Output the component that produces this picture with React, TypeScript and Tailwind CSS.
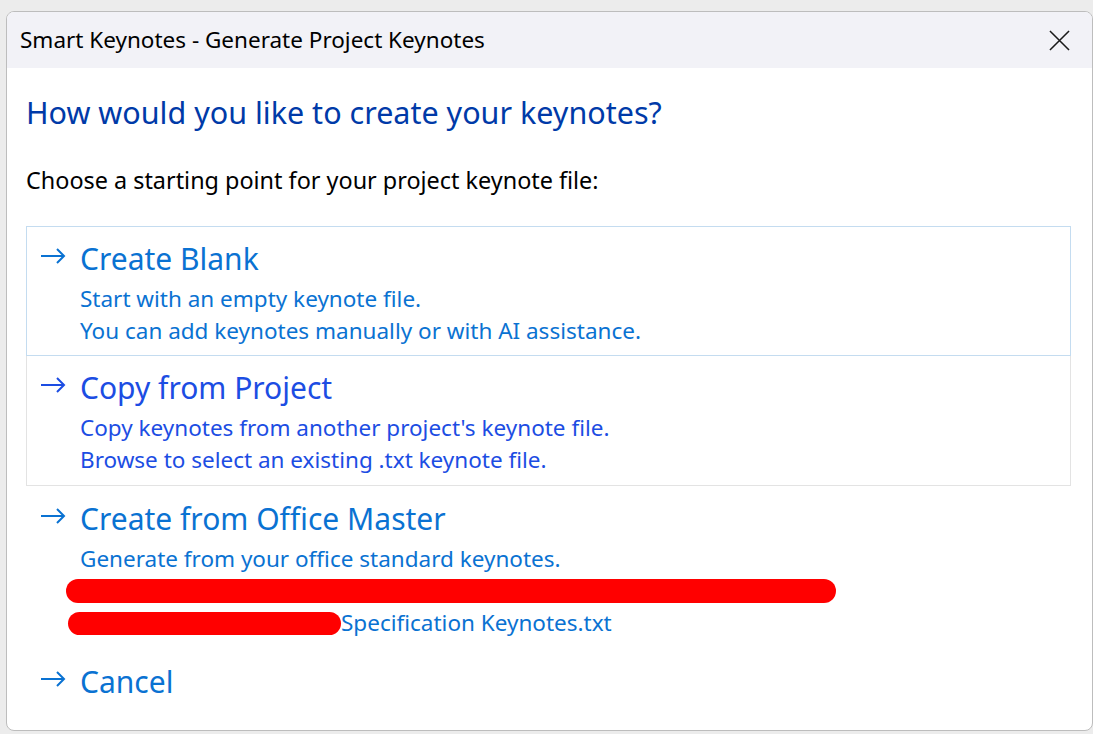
import React from 'react';

const Arrow: React.FC<{ className?: string }> = ({ className }) => (
  <svg viewBox="0 0 26 16" className={className} fill="none" stroke="currentColor" strokeWidth={2}>
    <path d="M1 8h23M17 1l7 7-7 7" />
  </svg>
);

type OptionProps = {
  title: string;
  lines?: React.ReactNode[];
  tone: string;
  frame: string;
};

const Option: React.FC<OptionProps> = ({ title, lines = [], tone, frame }) => (
  <button className={`flex w-full items-start text-left px-[13px] pt-[12px] ${frame} ${tone}`}>
    <Arrow className="mt-[9px] h-[16px] w-[26px] shrink-0" />
    <div className="ml-[14px] flex flex-col">
      <span className="text-[30px] leading-[40px]">{title}</span>
      <div className="mt-[4px] flex flex-col">
        {lines.map((l, i) => (
          <span key={i} className="text-[22.5px] leading-[32px]">
            {l}
          </span>
        ))}
      </div>
    </div>
  </button>
);

export default function App() {
  return (
    <div
      className="h-[734px] w-[1093px] overflow-hidden bg-[#ececec] pl-[6px] pt-[11px]"
      style={{ fontFamily: '"Noto Sans", "Open Sans", sans-serif' }}
    >
      <div className="flex h-[720px] w-[1087px] flex-col overflow-hidden rounded-[8px] border border-[#bdbdbd] bg-white">
        <div className="flex h-[56px] shrink-0 items-center justify-between bg-[#f2f2f7] pl-[13px] pr-[22px]">
          <span className="text-[22.5px] text-black">Smart Keynotes - Generate Project Keynotes</span>
          <svg viewBox="0 0 22 22" className="h-[21px] w-[21px] text-[#1a1a1a]" stroke="currentColor" strokeWidth={1.6}>
            <path d="M1 1l20 20M21 1L1 21" />
          </svg>
        </div>

        <div className="flex flex-col px-[19px]">
          <h1 className="mt-[24px] text-[30.5px] leading-[40px] text-[#003aa8]">
            How would you like to create your keynotes?
          </h1>
          <p className="mt-[33px] text-[23.4px] leading-[30px] text-black">
            Choose a starting point for your project keynote file:
          </p>

          <div className="mt-[31px] mr-[2px] flex flex-col">
            <Option
              title="Create Blank"
              tone="text-[#0a72d2]"
              frame="h-[130px] border border-[#c4dcf0]"
              lines={['Start with an empty keynote file.', 'You can add keynotes manually or with AI assistance.']}
            />
            <Option
              title="Copy from Project"
              tone="text-[#1c4de3]"
              frame="h-[130px] border border-t-0 border-[#e3e3e3]"
              lines={["Copy keynotes from another project's keynote file.", 'Browse to select an existing .txt keynote file.']}
            />
            <Option
              title="Create from Office Master"
              tone="text-[#0a72d2]"
              frame="h-[163px] border border-transparent"
              lines={[
                'Generate from your office standard keynotes.',
                <span className="-ml-[14px] mt-[4px] block h-[24px] w-[770px] rounded-full bg-[#ff0000]" />,
                <span className="mt-[4px] flex items-center">
                  <span className="-ml-[12px] inline-block h-[23px] w-[273px] rounded-full bg-[#ff0000]" />
                  <span>Specification Keynotes.txt</span>
                </span>,
              ]}
            />
            <Option title="Cancel" tone="text-[#0a72d2]" frame="border border-transparent" />
          </div>
        </div>
      </div>
    </div>
  );
}
